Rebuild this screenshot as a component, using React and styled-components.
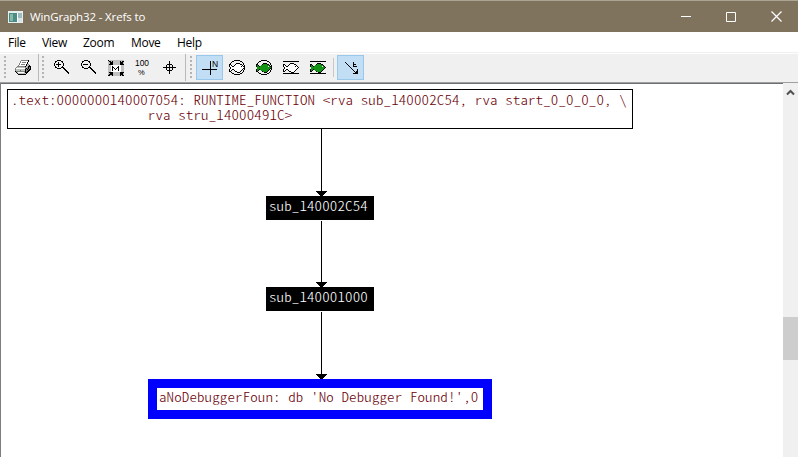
import React from "react";
import styled, { createGlobalStyle, css } from "styled-components";

const GlobalStyle = createGlobalStyle`
  * { box-sizing: border-box; }
  body { margin: 0; background: #fff; overflow: hidden; }
`;

const Window = styled.div`
  display: flex;
  flex-direction: column;
  width: 798px;
  height: 457px;
  background: #fff;
  font-family: "Open Sans", "Noto Sans", sans-serif;
`;

const TitleBar = styled.header`
  display: flex;
  align-items: center;
  flex: 0 0 32px;
  padding-left: 8px;
  background: #7f735e;
  border-top: 1px solid #aaa491;
  color: #fff;
`;

const Title = styled.h1`
  flex: 1;
  margin: 0 0 0 7px;
  font-size: 11.5px;
  font-weight: 400;
  line-height: 16px;
  letter-spacing: -0.14px;
`;

const CaptionButton = styled.button`
  display: grid;
  place-items: center;
  width: 45px;
  height: 31px;
  padding: 0;
  border: 0;
  background: none;
  color: #fff;
`;

const MenuBar = styled.nav`
  display: flex;
  flex: 0 0 22px;
  padding-left: 8px;
  background: linear-gradient(#fff 20px, #efefef 20px, #efefef 21px, #fff 21px);
`;

const MenuItem = styled.span`
  width: ${(p) => p.$width}px;
  font-size: 12px;
  line-height: 21px;
  letter-spacing: -0.3px;
  color: #000;
`;

const Toolbar = styled.div`
  display: flex;
  align-items: center;
  flex: 0 0 29px;
  padding: 0 0 2px 4px;
  margin-bottom: -1px;
  background: #f0f0f0;
  border-bottom: 1px solid #6d7073;
  box-shadow: inset 0 -1px #a0a0a0;
`;

const Grip = styled.div`
  width: 3px;
  height: 23px;
  margin-right: ${(p) => p.$after}px;
  background: repeating-linear-gradient(#b4b4b4 0 2px, transparent 2px 4px);
  border-right: 1px solid #f0f0f0;
`;

const Divider = styled.div`
  width: 1px;
  height: 27px;
  margin: 0 ${(p) => p.$after}px 0 ${(p) => p.$before}px;
  background: #b9b9b9;
  ${(p) => p.$short && css`height: 19px; background: #c8c8c8;`}
`;

const ToolButton = styled.button`
  display: grid;
  place-items: center;
  width: 27px;
  height: 25px;
  padding: 0 0 0 2px;
  border: 1px solid ${(p) => (p.$active ? "#98c8ec" : "transparent")};
  background: ${(p) => (p.$active ? "#c2def5" : "none")};
`;

const Icon = styled.svg`
  display: block;
  width: 17px;
  height: 17px;
  shape-rendering: crispEdges;
  font-family: "Liberation Sans", sans-serif;
`;

const Workspace = styled.main`
  display: flex;
  flex: 1;
  border-left: 1px solid #7b7d80;
`;

const Canvas = styled.div`
  position: relative;
  flex: 1;
`;

const ScrollBar = styled.div`
  display: flex;
  flex-direction: column;
  align-items: center;
  width: 15px;
  background: #f0f0f0;
`;

const ScrollArrow = styled.svg`
  width: 9px;
  height: 7px;
  margin: 6px 0 221px;
`;

const Thumb = styled.div`
  width: 15px;
  height: 43px;
  background: #cdcdcd;
`;

const variants = {
  plain: css`padding: 3px 3px; border: 1px solid #000; color: #6a0008;`,
  dark: css`padding: 3px 3px; background: #000; color: #fff;`,
  selected: css`padding: 2px 2px; border: 9px solid #0000ff; color: #6a0008;`,
};

const Node = styled.div`
  position: absolute;
  left: ${(p) => p.$x}px;
  top: ${(p) => p.$y}px;
  width: ${(p) => p.$w}px;
  height: ${(p) => p.$h}px;
  ${(p) => variants[p.$variant]}
`;

const Code = styled.pre`
  width: max-content;
  margin: -1px 0 0;
  font-family: "Noto Sans CJK SC", "Liberation Mono", monospace;
  font-feature-settings: "hwid" 1;
  font-weight: 300;
  font-size: 13px;
  line-height: 15px;
  letter-spacing: 0.1px;
  transform: scaleX(1.152);
  transform-origin: 0 0;
`;

const Edges = styled.svg`
  position: absolute;
  left: 0;
  top: 0;
  width: 782px;
  height: 374px;
  shape-rendering: crispEdges;
`;

/* Draws rows of characters as square pixels, one fill per character. */
const palette = { "#": "#000", w: "#fff", g: "#c0c0c0", d: "#808080", G: "#149414" };

function Pixels({ rows, x = 0, y = 0 }) {
  const paths = {};
  rows.forEach((row, r) => {
    [...row].forEach((c, i) => {
      if (palette[c]) paths[c] = (paths[c] || "") + `M${x + i} ${y + r}h1v1h-1z`;
    });
  });
  return Object.entries(paths).map(([c, d]) => <path key={c} d={d} fill={palette[c]} />);
}

const printer = [
  "......ddddddd#..",
  ".....dwwwwwww#..",
  ".....dwddddw#...",
  "....dwwwwwww#...",
  "....dwddddw#gd..",
  "...dwwwwwww#gg#.",
  "..dddddddd#gg###",
  ".dggggggggdgd#d#",
  "dwwwwwwwwwd#d#d#",
  "dggggggggg#d#d##",
  "dggggGgggg#dd##.",
  "#ddddddddd#d##..",
  ".#gwwwwwwg###...",
  "..#gggggggg#....",
  "...########.....",
];
const lens = (plus) => [
  "...####..........",
  ".##....##........",
  (plus ? ".#..#...#" : ".#......#") + "........",
  plus ? "#...#....#......." : "#........#.......",
  "#.#####..#.......",
  plus ? "#...#....#......." : "#........#.......",
  (plus ? ".#..#...#" : ".#......#") + "........",
  ".##....###.......",
  "...####..##......",
  "..........##.....",
  "...........##....",
  "............##...",
  ".............##..",
  "..............#..",
];
const fit = [
  "#ggggggggggggggg",
  "g##g#ggggggg#g##",
  "gg###ggggggg###g",
  "gg###ggggggg###g",
  "g####ggggggg####",
  "gggwwwwwwwwwwggg",
  "gggw#wwwww#wwggg",
  "gggw##www##wwggg",
  "gggw#w#w#w#wwggg",
  "gggw#ww#ww#wwggg",
  "gggw#wwwww#wwggg",
  "gggwwwwwwwwwwggg",
  "g####ggggggg####",
  "gg###ggggggg###g",
  "g####ggggggg###g",
  "##gg#ggggggg#g##",
];
const center = [
  "......#......",
  "......#......",
  "......#......",
  "....#####....",
  "...#..#..#...",
  "...#..#..#...",
  "#############",
  "...#..#..#...",
  "...#..#..#...",
  "....#####....",
  "......#......",
  "......#......",
  "......#......",
];
const fish = [
  ".......####.....",
  "##....#wwww##...",
  "#w#..#wwwwwww#..",
  "#ww##wwwwwww#w#.",
  ".#wwwwwwwwwwwww#",
  ".#wwwwwwwwwwww#.",
  "#ww##wwwwwwww#..",
  "#w#..#wwwwww#...",
  "##....##www#....",
  "........###.....",
];
const greenFish = [
  ".......####.....",
  "##....#GGGG##...",
  "#G#..GGGGGGGG#..",
  "#GG#GGGGGGGGwG#.",
  ".GGGGGGGGGGGGGG#",
  ".GGGGGGGGGGGGG#.",
  "#GG#GGGGGGGGG#..",
  "#G#..GGGGGGG#...",
  "##....#GGGG#....",
  "........###.....",
];
const ring = [
  ".....######.....",
  "...##......##...",
  "..#..........#..",
  ".#............#.",
  ".#............#.",
  "#..............#",
  "#..............#",
  "...............#",
  "...............#",
  "#..............#",
  ".#............#.",
  ".#............#.",
  "..#..........#..",
  "...##......##...",
  ".....######.....",
];

const FishIcon = ({ green, round }) => (
  <Icon viewBox="1 0 17 17">
    {round ? (
      <Pixels rows={ring} x={1} y={1} />
    ) : (
      <path d="M1 2h16v1H1zM1 14h16v1H1z" />
    )}
    <Pixels rows={green ? greenFish : fish} x={1} y={4} />
  </Icon>
);

export default function App() {
  return (
    <Window>
      <GlobalStyle />
      <TitleBar>
        <svg width="15" height="12" shapeRendering="crispEdges">
          <path fill="#e8eeee" d="M0 0h15v12H0z" />
          <path fill="#4b8d85" d="M1 2h8v9H1z" />
          <path fill="#87b9aa" d="M2 3h3v7H2z" />
          <path fill="#fff" d="M9 2h1v9H9z" />
          <path fill="#9dbbc0" d="M10 2h4v5h-4z" />
          <path fill="#d7e3e6" d="M10 7h4v4h-4z" />
        </svg>
        <Title>WinGraph32 - Xrefs to</Title>
        <CaptionButton aria-label="Minimize">
          <svg width="11" height="11" shapeRendering="crispEdges">
            <path fill="currentColor" d="M1 5h10v1H1z" />
          </svg>
        </CaptionButton>
        <CaptionButton aria-label="Maximize">
          <svg width="10" height="10" fill="none" stroke="currentColor">
            <path d="M.5 .5h9v9h-9z" />
          </svg>
        </CaptionButton>
        <CaptionButton aria-label="Close">
          <svg width="13" height="11" stroke="currentColor" strokeWidth="1.2">
            <path d="M2.500 .5l10 10M12.500 .5l-10 10" />
          </svg>
        </CaptionButton>
      </TitleBar>
      <MenuBar>
        <MenuItem $width={34}>File</MenuItem>
        <MenuItem $width={41}>View</MenuItem>
        <MenuItem $width={48}>Zoom</MenuItem>
        <MenuItem $width={46}>Move</MenuItem>
        <MenuItem $width={30}>Help</MenuItem>
      </MenuBar>
      <Toolbar>
        <Grip $after={2} />
        <ToolButton aria-label="Print">
          <Icon viewBox="0 0 17 17"><Pixels rows={printer} y={1} /></Icon>
        </ToolButton>
        <Divider $before={2} $after={3} />
        <Grip $after={3} />
        <ToolButton aria-label="Zoom in">
          <Icon viewBox="0 0 17 17"><Pixels rows={lens(true)} y={1} /></Icon>
        </ToolButton>
        <ToolButton aria-label="Zoom out">
          <Icon viewBox="0 0 17 17"><Pixels rows={lens(false)} y={1} /></Icon>
        </ToolButton>
        <ToolButton aria-label="Fit window">
          <Icon viewBox="0 0 17 17"><Pixels rows={fit} y={1} /></Icon>
        </ToolButton>
        <ToolButton aria-label="Zoom 100%">
          <Icon viewBox="0 0 17 17">
            <text x="0" y="7" fontSize="8.500" textLength="14" lengthAdjust="spacingAndGlyphs">100</text>
            <text x="3" y="15.500" fontSize="7.500">%</text>
          </Icon>
        </ToolButton>
        <ToolButton aria-label="Center">
          <Icon viewBox="0 0 17 17"><Pixels rows={center} x={1} y={2} /></Icon>
        </ToolButton>
        <Divider $before={2} $after={4} />
        <Grip $after={3} />
        <ToolButton $active aria-label="Normal layout">
          <Icon viewBox="0 0 17 17">
            <path d="M0 10h15v1H0zM8 2h1v14H8z" />
            <text x="10" y="8" fontSize="8.500">N</text>
          </Icon>
        </ToolButton>
        <ToolButton aria-label="Polar fisheye"><FishIcon round /></ToolButton>
        <ToolButton aria-label="Filled polar fisheye"><FishIcon round green /></ToolButton>
        <ToolButton aria-label="Cartesian fisheye"><FishIcon /></ToolButton>
        <ToolButton aria-label="Filled cartesian fisheye"><FishIcon green /></ToolButton>
        <Divider $short $before={2} $after={3} />
        <ToolButton $active aria-label="Layout edges">
          <Icon viewBox="0 0 17 17">
            <path fill="none" stroke="#000" strokeWidth="1.300" d="M2 3l12 12" />
            <path d="M10 14h5v1h-5zM14 10h1v5h-1zM12 13h2v1h-2zM13 12h1v2h-1zM10 3h1v5h-1zM11 7h3v1h-3zM11 5h2v1h-2z" />
          </Icon>
        </ToolButton>
      </Toolbar>
      <Workspace>
        <Canvas>
          <Edges>
            <path d="M320 46h1v67h-1zM320 138h1v66h-1zM320 229h1v67h-1z" />
            {[108, 199, 291].map((y) => (
              <path key={y} d={`M315 ${y}h11v1h-1v1h-1v1h-1v1h-1v1h-3v-1h-1v-1h-1v-1h-1v-1h-1z`} />
            ))}
          </Edges>
          <Node $variant="plain" $x={6} $y={6} $w={626} $h={40}>
            <Code>
              {".text:0000000140007054: RUNTIME_FUNCTION <rva sub_140002C54, rva start_0_0_0_0, \\\n                  rva stru_14000491C>"}
            </Code>
          </Node>
          <Node $variant="dark" $x={265} $y={113} $w={108} $h={24}><Code>sub_140002C54</Code></Node>
          <Node $variant="dark" $x={265} $y={204} $w={108} $h={24}><Code>sub_140001000</Code></Node>
          <Node $variant="selected" $x={147} $y={296} $w={344} $h={40}>
            <Code>{"aNoDebuggerFoun: db 'No Debugger Found!',0"}</Code>
          </Node>
        </Canvas>
        <ScrollBar>
          <ScrollArrow viewBox="0 0 9 7">
            <path d="M1 5.500l3.500-3.500 3.500 3.500" fill="none" stroke="#505050" strokeWidth="2" />
          </ScrollArrow>
          <Thumb />
        </ScrollBar>
      </Workspace>
    </Window>
  );
}
